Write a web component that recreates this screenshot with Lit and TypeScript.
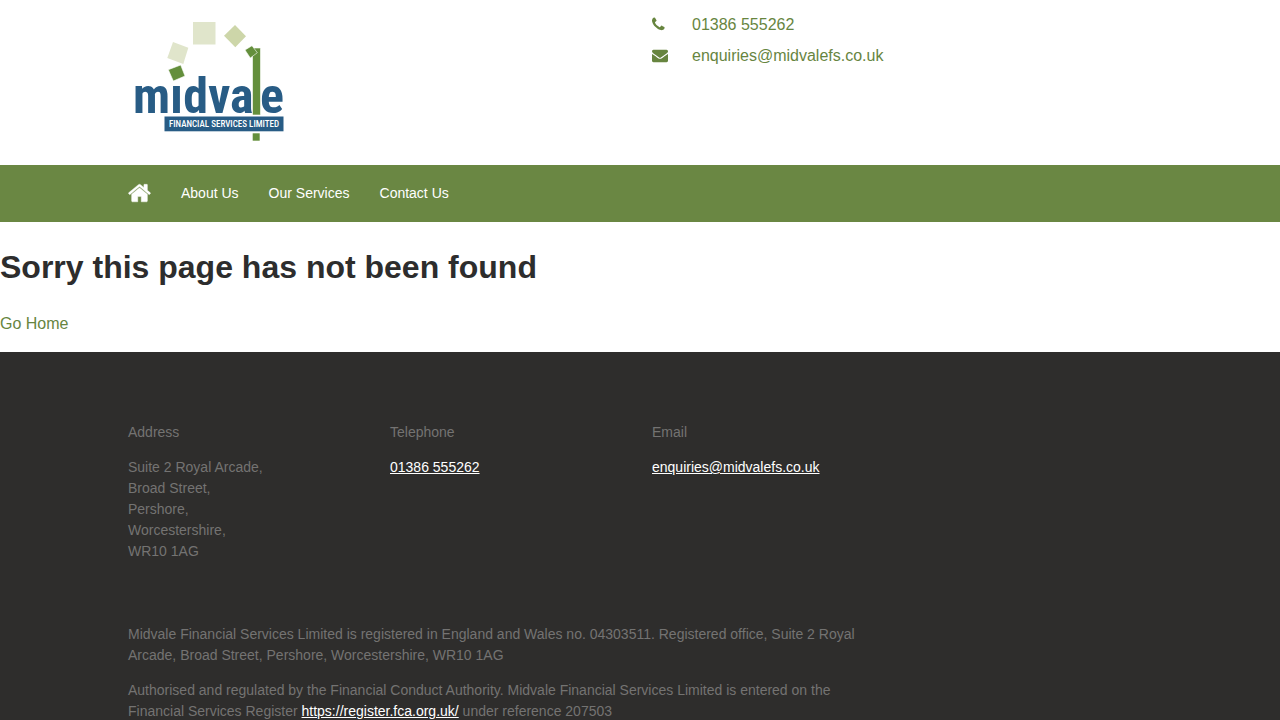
import { LitElement, html, css, svg } from "lit";
import { customElement } from "lit/decorators.js";

const PHONE = "M1600 1240q0 27-10 70.5t-21 68.5q-21 50-122 106-94 51-186 51-27 0-53-3.5t-57.5-12.5-47-14.5-55.5-20.5-49-18q-98-35-175-83-127-79-264-216t-216-264q-48-77-83-175-3-9-18-49t-20.5-55.5-14.5-47-12.5-57.5-3.5-53q0-92 51-186 56-101 106-122 25-11 68.5-21t70.5-10q14 0 21 3 18 6 53 76 11 19 30 54t35 63.5 31 53.5q3 4 17.5 25t21.5 35.5 7 28.5q0 20-28.5 50t-62 55-62 53-28.5 46q0 9 5 22.5t8.5 20.5 14 24 11.5 19q76 137 174 235t235 174q2 1 19 11.5t24 14 20.5 8.5 22.5 5q18 0 46-28.5t53-62 55-62 50-28.5q14 0 28.5 7t35.5 21.5 25 17.5q25 15 53.5 31t63.5 35 54 30q70 35 76 53 3 7 3 21z";
const ENVELOPE = "M1792 710v794q0 66-47 113t-113 47h-1472q-66 0-113-47t-47-113v-794q44 49 101 87 362 246 497 345 57 42 92.5 65.5t94.5 48 110 24.5h2q51 0 110-24.5t94.5-48 92.5-65.5q170-123 498-345 57-39 100-87zm0-294q0 79-49 151t-122 123q-376 261-468 325-10 7-42.5 31t-54 38.5-52 32.5-57.5 27-50 9h-2q-23 0-50-9t-57.5-27-52-32.5-54-38.5-42.5-31q-91-64-262-182.5t-205-142.5q-62-42-117-115.5t-55-136.5q0-78 41.5-130t118.5-52h1472q65 0 112.5 47t47.5 113z";
const HOME = "M1472 992v480q0 26-19 45t-45 19h-384v-384h-256v384h-384q-26 0-45-19t-19-45v-480q0-1 .5-3t.5-3l575-474 575 474q1 2 1 6zm223-69l-62 74q-8 9-21 11h-3q-13 0-21-7l-692-577-692 577q-12 8-24 7-13-2-21-11l-62-74q-8-10-7-23.5t11-21.5l719-599q32-26 76-26t76 26l244 204v-195q0-14 9-23t23-9h192q14 0 23 9t9 23v408l219 182q10 8 11 21.5t-7 23.5z";

const logoArt = svg`
  <rect x="193" y="22" width="22.5" height="22.5" fill="#e0e5cb" />
  <path d="M235 25L246 36.3L235.3 47.3L224 35.7Z" fill="#cdd6a9" />
  <path d="M173 42L188.3 47.7L183.3 64L167.3 58Z" fill="#e0e5cb" />
  <text class="word" x="133" y="113">mıdva</text>
  <text class="word" x="260" y="113">e</text>
  <path d="M168.3 69.7L180.7 65L185 76L173.3 81Z" fill="#648f3c" stroke="#fff" stroke-width="0.6" />
  <rect x="252.5" y="48" width="8" height="67" fill="#648f3c" stroke="#fff" stroke-width="0.6" />
  <path d="M245 50L252 45.7L257.3 52.7L250.3 58Z" fill="#648f3c" stroke="#fff" stroke-width="0.6" />
  <rect x="164.5" y="116.5" width="119" height="14.8" fill="#285c85" />
  <text class="strap" x="224" y="127" text-anchor="middle">FINANCIAL SERVICES LIMITED</text>
  <rect x="252.7" y="133.3" width="7" height="7.4" fill="#648f3c" />
`;

@customElement("app-root")
export class AppRoot extends LitElement {
  static styles = css`
    :host {
      display: block;
      background: #fff;
      color: #2d2d2d;
      font: 16px/24px "Liberation Sans", Arial, sans-serif;
    }
    a { color: #67853f; text-decoration: none; }
    svg { display: block; fill: currentColor; }
    .wrap {
      width: 80%;
      margin: 0 auto;
      display: grid;
      grid-template-columns: repeat(4, 1fr);
      column-gap: 24px;
    }
    .header { padding: 12px 0; }
    .brand { grid-column: span 2; justify-self: start; }
    .word { font: bold 50px "Roboto Condensed", Roboto, sans-serif; fill: #285c85; }
    .strap { font: 500 9px "Roboto Condensed", Roboto, sans-serif; fill: #fff; }
    .contact {
      grid-column: span 2;
      display: flex;
      flex-direction: column;
      gap: 7px;
      padding-top: 1px;
    }
    .row { display: grid; grid-template-columns: 16px 1fr; column-gap: 24px; align-items: center; }
    .row svg { color: #67853f; }
    .nav { background: #6a8743; font-size: 14px; line-height: 21px; }
    .menu {
      width: 80%;
      margin: 0 auto;
      padding: 18px 0;
      display: flex;
      align-items: center;
      gap: 30px;
      list-style: none;
    }
    .menu a { color: #fff; }
    .title { margin: 21px 0; font-size: 32px; line-height: 48px; }
    .back { margin: 0 0 16px; }
    .footer {
      background: #2e2d2c;
      color: #747372;
      padding: 70px 0 0;
      font-size: 14px;
      line-height: 21px;
    }
    .footer p { margin: 0 0 14px; }
    .footer a { color: #fff; text-decoration: underline; }
    .legal { grid-column: span 3; margin-top: 48px; }
  `;

  render() {
    return html`
      <header class="header">
        <div class="wrap">
          <a class="brand" href="#" aria-label="Midvale Financial Services Limited">
            <svg width="160" height="141" viewBox="128 12 160 141">${logoArt}</svg>
          </a>
          <div class="contact">
            <div class="row">
              <svg width="16" height="16" viewBox="192 64 1792 1792" aria-hidden="true"><path d=${PHONE} /></svg>
              <span><a href="tel:01386555262">01386 555262</a></span>
            </div>
            <div class="row">
              <svg width="16" height="16" viewBox="0 64 1792 1792" aria-hidden="true"><path d=${ENVELOPE} /></svg>
              <span><a href="mailto:enquiries@midvalefs.co.uk">enquiries@midvalefs.co.uk</a></span>
            </div>
          </div>
        </div>
      </header>
      <nav class="nav">
        <ul class="menu">
          <li>
            <a href="#" aria-label="Home"><svg width="23" height="21" viewBox="64 160 1664 1536"><path d=${HOME} stroke="currentColor" stroke-width="30" /></svg></a>
          </li>
          <li><a href="#about">About Us</a></li>
          <li><a href="#services">Our Services</a></li>
          <li><a href="#contact">Contact Us</a></li>
        </ul>
      </nav>
      <main>
        <h1 class="title">Sorry this page has not been found</h1>
        <p class="back"><a href="#">Go Home</a></p>
      </main>
      <footer class="footer">
        <div class="wrap">
          <div>
            <p>Address</p>
            <p>Suite 2 Royal Arcade,<br />Broad Street,<br />Pershore,<br />Worcestershire,<br />WR10 1AG</p>
          </div>
          <div>
            <p>Telephone</p>
            <p><a href="tel:01386555262">01386 555262</a></p>
          </div>
          <div>
            <p>Email</p>
            <p><a href="mailto:enquiries@midvalefs.co.uk">enquiries@midvalefs.co.uk</a></p>
          </div>
        </div>
        <div class="wrap">
          <div class="legal">
            <p>Midvale Financial Services Limited is registered in England and Wales no. 04303511. Registered office, Suite 2 Royal Arcade, Broad Street, Pershore, Worcestershire, WR10 1AG</p>
            <p>Authorised and regulated by the Financial Conduct Authority. Midvale Financial Services Limited is entered on the Financial Services Register <a href="https://register.fca.org.uk/">https://register.fca.org.uk/</a> under reference 207503</p>
          </div>
        </div>
      </footer>
    `;
  }
}
